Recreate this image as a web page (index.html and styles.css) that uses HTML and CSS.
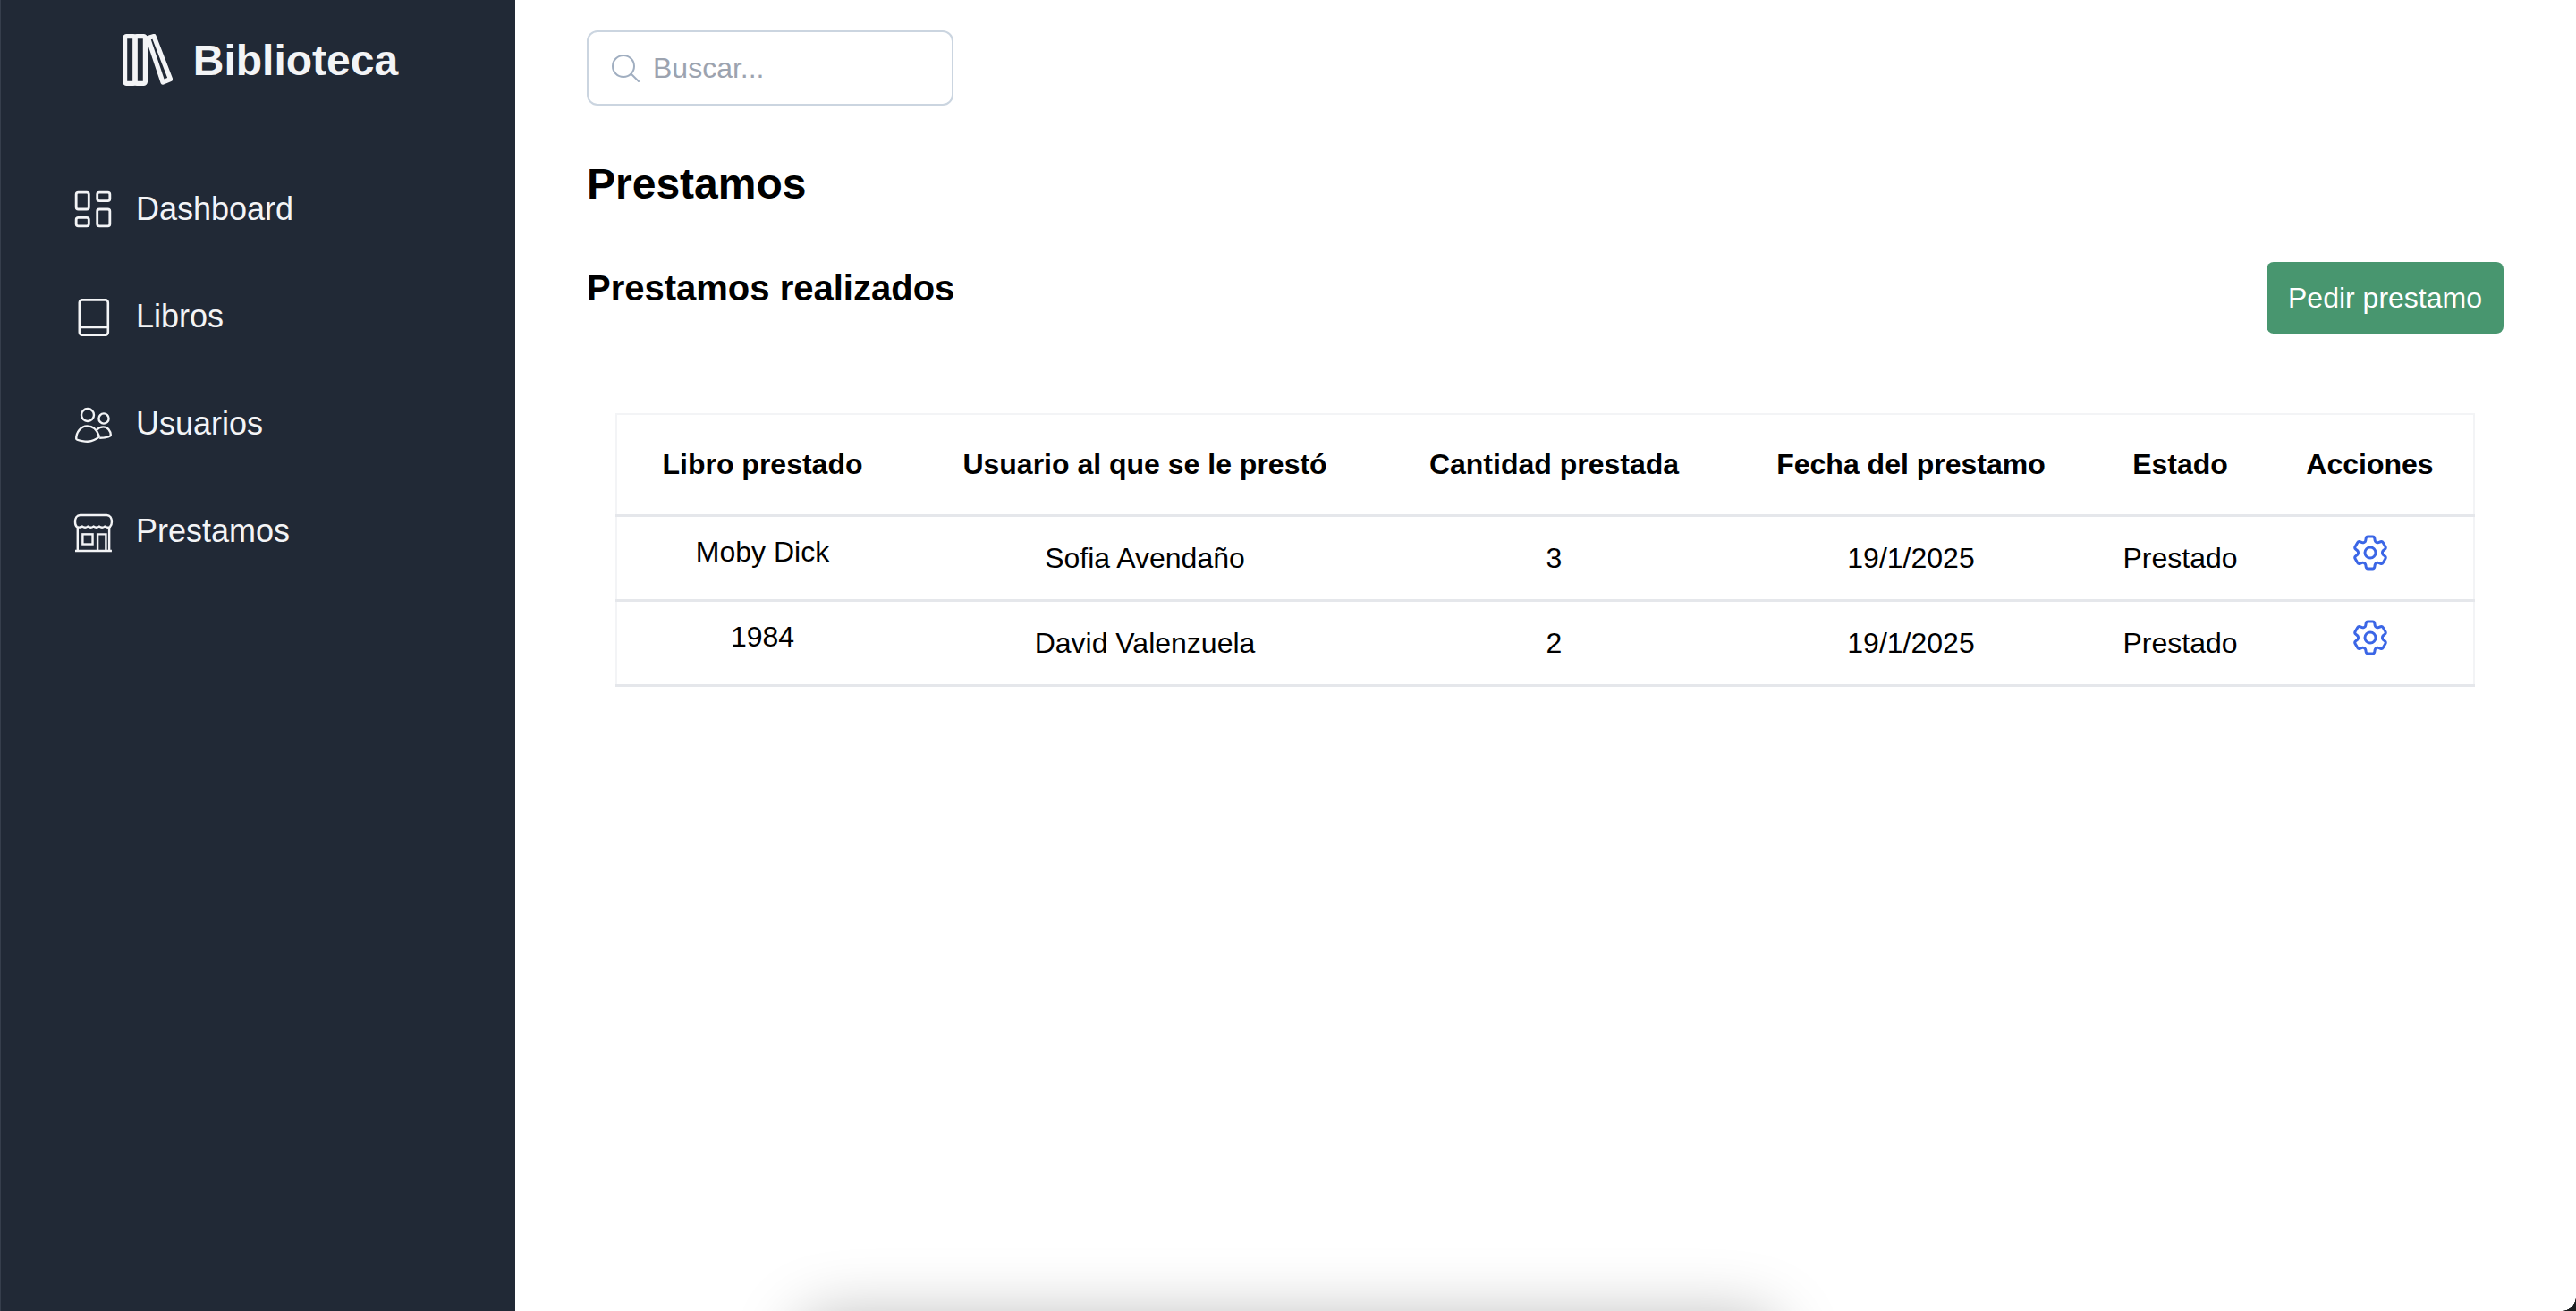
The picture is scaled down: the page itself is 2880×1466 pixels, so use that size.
FILE: index.html
```html
<!DOCTYPE html>
<html lang="es">
<head>
  <meta charset="UTF-8" />
  <title>Biblioteca</title>
  <link rel="stylesheet" href="styles.css">
</head>
<body>
  <aside class="sidebar">
    <div class="logo">
      <svg class="logo-icon" viewBox="0 0 56 58" fill="none" stroke="currentColor" stroke-width="5.200" stroke-linejoin="round">
        <rect x="2.600" y="2.600" width="11.400" height="52.800" rx="2"/>
        <rect x="14" y="2.600" width="11.400" height="52.800" rx="2"/>
        <path d="M28.500 4.500l6.500-2 18.500 48-8.500 3.500z"/>
      </svg>
      <span>Biblioteca</span>
    </div>
    <nav class="nav">
      <a class="nav-item" href="#">
        <svg class="nav-icon" viewBox="1.800 1.800 20.400 20.400" fill="none" stroke="currentColor" stroke-width="1.200">
          <path d="M5 4h4a1 1 0 0 1 1 1v6a1 1 0 0 1-1 1H5a1 1 0 0 1-1-1V5a1 1 0 0 1 1-1m0 12h4a1 1 0 0 1 1 1v2a1 1 0 0 1-1 1H5a1 1 0 0 1-1-1v-2a1 1 0 0 1 1-1m10-4h4a1 1 0 0 1 1 1v6a1 1 0 0 1-1 1h-4a1 1 0 0 1-1-1v-6a1 1 0 0 1 1-1m0-8h4a1 1 0 0 1 1 1v2a1 1 0 0 1-1 1h-4a1 1 0 0 1-1-1V5a1 1 0 0 1 1-1"/>
        </svg>
        Dashboard
      </a>
      <a class="nav-item" href="#">
        <svg class="nav-icon" viewBox="0 0 24 24" fill="none" stroke="currentColor" stroke-width="1.300">
          <rect x="4.400" y="2.700" width="16" height="19.600" rx="1.500"/>
          <path d="M4.400 18h16"/>
        </svg>
        Libros
      </a>
      <a class="nav-item" href="#">
        <svg class="nav-icon" viewBox="0 0 24 24" fill="none" stroke="currentColor" stroke-width="1.200">
          <circle cx="9" cy="7" r="3.500"/>
          <circle cx="18" cy="9" r="2.800"/>
          <path d="M2.600 20.300C2.600 16.500 5.200 13.200 8.700 13.200c3 0 5.500 2 6.700 5.600.2.800-2.400 2.200-4.400 2.800-2.400.7-8.400-.3-8.400-1.300z"/>
          <path d="M14 15.400c1-1.100 2.300-1.700 3.700-1.700 2.500 0 4.200 2.200 4.200 4.600 0 .9-3.300 1.500-6.300 1.600"/>
        </svg>
        Usuarios
      </a>
      <a class="nav-item" href="#">
        <svg class="nav-icon" viewBox="-1.150 -1.700 25.800 25.800" fill="none" stroke="currentColor" stroke-width="1.300">
          <path d="M4 1.500h16c2 0 3 2 3 4 0 1.500-.5 2.500-1 3-1 .6-2 .6-3.200-.2-1.100.8-2.200.8-3.400 0-1.100.8-2.200.8-3.400 0-1.100.8-2.200.8-3.400 0-1.100.8-2.200.8-3.400 0C4 9 3 9 2 8.500c-.6-.5-1-1.500-1-3 0-2 1-4 3-4z"/>
          <path d="M2.500 9v14M21.500 9v14M1 23h22"/>
          <rect x="5.500" y="13" width="6" height="6"/>
          <path d="M14.500 23V13h5v10"/>
        </svg>
        Prestamos
      </a>
    </nav>
  </aside>

  <main class="main">
    <label class="search">
      <svg class="search-icon" viewBox="0 0 32 32" fill="none" stroke="currentColor" stroke-width="2" stroke-linecap="round">
        <circle cx="14" cy="14" r="12"/>
        <path d="M23 23l8 8"/>
      </svg>
      <input class="search-input" type="text" placeholder="Buscar...">
    </label>

    <h1 class="page-title">Prestamos</h1>

    <div class="section-head">
      <h2 class="section-title">Prestamos realizados</h2>
      <button class="btn-green" type="button">Pedir prestamo</button>
    </div>

    <div class="table-wrap">
      <table class="loans">
        <thead>
          <tr>
            <th class="col-book">Libro prestado</th>
            <th class="col-user">Usuario al que se le prestó</th>
            <th class="col-qty">Cantidad prestada</th>
            <th class="col-date">Fecha del prestamo</th>
            <th class="col-state">Estado</th>
            <th class="col-actions">Acciones</th>
          </tr>
        </thead>
        <tbody>
          <tr>
            <td class="cell-top">Moby Dick</td>
            <td>Sofia Avendaño</td>
            <td>3</td>
            <td>19/1/2025</td>
            <td>Prestado</td>
            <td class="cell-top cell-actions">
              <svg class="gear" viewBox="0 0 24 24" fill="none" stroke="currentColor" stroke-width="1.500" stroke-linecap="round" stroke-linejoin="round">
                <path d="M9.594 3.940c.090-.542.560-.940 1.110-.940h2.593c.550 0 1.020.398 1.110.940l.213 1.281c.063.374.313.686.645.870.074.040.147.083.220.127.325.196.720.257 1.075.124l1.217-.456a1.125 1.125 0 0 1 1.370.490l1.296 2.247a1.125 1.125 0 0 1-.260 1.431l-1.003.827c-.293.241-.438.613-.430.992a7.723 7.723 0 0 1 0 .255c-.008.378.137.750.430.991l1.004.827c.424.350.534.955.260 1.430l-1.298 2.247a1.125 1.125 0 0 1-1.369.491l-1.217-.456c-.355-.133-.750-.072-1.076.124a6.470 6.470 0 0 1-.220.128c-.331.183-.581.495-.644.869l-.213 1.281c-.090.543-.560.940-1.110.940h-2.594c-.550 0-1.019-.398-1.110-.940l-.213-1.281c-.062-.374-.312-.686-.644-.870a6.520 6.520 0 0 1-.220-.127c-.325-.196-.720-.257-1.076-.124l-1.217.456a1.125 1.125 0 0 1-1.369-.490l-1.297-2.247a1.125 1.125 0 0 1 .260-1.431l1.004-.827c.292-.240.437-.613.430-.991a6.932 6.932 0 0 1 0-.255c.007-.380-.138-.751-.430-.992l-1.004-.827a1.125 1.125 0 0 1-.260-1.430l1.297-2.247a1.125 1.125 0 0 1 1.370-.491l1.216.456c.356.133.751.072 1.076-.124.072-.044.146-.086.220-.128.332-.183.582-.495.644-.869l.214-1.280Z"/>
                <path d="M15 12a3 3 0 1 1-6 0 3 3 0 0 1 6 0Z"/>
              </svg>
            </td>
          </tr>
          <tr>
            <td class="cell-top">1984</td>
            <td>David Valenzuela</td>
            <td>2</td>
            <td>19/1/2025</td>
            <td>Prestado</td>
            <td class="cell-top cell-actions">
              <svg class="gear" viewBox="0 0 24 24" fill="none" stroke="currentColor" stroke-width="1.500" stroke-linecap="round" stroke-linejoin="round">
                <path d="M9.594 3.940c.090-.542.560-.940 1.110-.940h2.593c.550 0 1.020.398 1.110.940l.213 1.281c.063.374.313.686.645.870.074.040.147.083.220.127.325.196.720.257 1.075.124l1.217-.456a1.125 1.125 0 0 1 1.370.490l1.296 2.247a1.125 1.125 0 0 1-.260 1.431l-1.003.827c-.293.241-.438.613-.430.992a7.723 7.723 0 0 1 0 .255c-.008.378.137.750.430.991l1.004.827c.424.350.534.955.260 1.430l-1.298 2.247a1.125 1.125 0 0 1-1.369.491l-1.217-.456c-.355-.133-.750-.072-1.076.124a6.470 6.470 0 0 1-.220.128c-.331.183-.581.495-.644.869l-.213 1.281c-.090.543-.560.940-1.110.940h-2.594c-.550 0-1.019-.398-1.110-.940l-.213-1.281c-.062-.374-.312-.686-.644-.870a6.520 6.520 0 0 1-.220-.127c-.325-.196-.720-.257-1.076-.124l-1.217.456a1.125 1.125 0 0 1-1.369-.490l-1.297-2.247a1.125 1.125 0 0 1 .260-1.431l1.004-.827c.292-.240.437-.613.430-.991a6.932 6.932 0 0 1 0-.255c.007-.380-.138-.751-.430-.992l-1.004-.827a1.125 1.125 0 0 1-.260-1.430l1.297-2.247a1.125 1.125 0 0 1 1.370-.491l1.216.456c.356.133.751.072 1.076-.124.072-.044.146-.086.220-.128.332-.183.582-.495.644-.869l.214-1.280Z"/>
                <path d="M15 12a3 3 0 1 1-6 0 3 3 0 0 1 6 0Z"/>
              </svg>
            </td>
          </tr>
        </tbody>
      </table>
    </div>
  </main>

  <!-- window shadow and corner caught by the screenshot -->
  <div class="window-shadow"></div>
  <div class="window-corner"></div>
</body>
</html>
```

FILE: styles.css
```css
* {
  box-sizing: border-box;
}
html, body {
  height: 100%;
}
body {
  margin: 0;
  display: flex;
  overflow: hidden;
  position: relative;
  background: #fff;
  color: #000;
  font-family: "Liberation Sans", Arial, sans-serif;
  font-size: 32px;
}
.sidebar {
  width: 576px;
  flex-shrink: 0;
  background: #212936;
  border-left: 1px solid #363e4c;
  color: #f3f4f6;
}
.logo {
  display: flex;
  align-items: center;
  justify-content: center;
  gap: 23px;
  height: 64px;
  margin-top: 35px;
  padding-left: 5px;
  font-size: 48px;
  font-weight: 700;
}
.logo-icon {
  width: 56px;
  height: 58px;
}
.nav {
  display: flex;
  flex-direction: column;
  margin-top: 75px;
  padding-left: 79px;
}
.nav-item {
  display: flex;
  align-items: center;
  gap: 24px;
  height: 120px;
  color: #f3f4f6;
  font-size: 36px;
  text-decoration: none;
}
.nav-icon {
  width: 48px;
  height: 48px;
  flex-shrink: 0;
}
.main {
  flex: 1;
  padding: 34px 82px 0 80px;
}
.search {
  display: flex;
  align-items: center;
  gap: 15px;
  width: 410px;
  height: 84px;
  padding: 0 25px;
  border: 2px solid #cbd5e0;
  border-radius: 12px;
  color: #a0aec0;
}
.search-icon {
  width: 32px;
  height: 32px;
  flex-shrink: 0;
}
.search-input {
  width: 100%;
  min-width: 0;
  border: none;
  outline: none;
  padding: 0;
  font-family: inherit;
  font-size: 32px;
}
.search-input::placeholder {
  color: #9ca3af;
}
.page-title {
  margin: 58px 0 0;
  font-size: 48px;
  line-height: 60px;
}
.section-head {
  display: flex;
  justify-content: space-between;
  align-items: flex-start;
  margin-top: 57px;
}
.section-title {
  margin: 0;
  padding-top: 4px;
  font-size: 40px;
  line-height: 50px;
}
.btn-green {
  height: 80px;
  padding: 0 24px;
  border: none;
  border-radius: 8px;
  background: #48966f;
  color: #fff;
  font-family: inherit;
  font-size: 32px;
}
.table-wrap {
  margin-top: 89px;
  padding: 0 32px;
}
.loans {
  width: 2077px;
  table-layout: fixed;
  border-collapse: collapse;
  border: 2px solid #f3f4f6;
  text-align: center;
}
.loans th {
  height: 113px;
  padding: 0;
  font-weight: 700;
  border-bottom: 3px solid #e5e7eb;
}
.loans th.col-actions {
  padding-left: 2px;
}
.loans td {
  height: 95px;
  padding: 2px 0 0;
  border-bottom: 3px solid #e5e7eb;
}
.loans td.cell-top {
  padding-bottom: 14px;
}
.loans td.cell-actions {
  padding-left: 2px;
}
.col-book { width: 326px; }
.col-user { width: 530px; }
.col-qty { width: 385px; }
.col-date { width: 413px; }
.col-state { width: 189px; }
.col-actions { width: 234px; }
.gear {
  display: block;
  width: 48px;
  height: 48px;
  margin: 0 auto;
  color: #3b66e6;
}
.window-shadow {
  position: absolute;
  left: 800px;
  bottom: 0;
  width: 1280px;
  height: 130px;
  overflow: hidden;
}
.window-shadow::after {
  content: "";
  position: absolute;
  left: 100px;
  top: 144px;
  width: 1080px;
  height: 200px;
  border-radius: 30px;
  box-shadow: 0 0 70px 10px rgba(0, 0, 0, 0.26);
}
.window-corner {
  position: absolute;
  right: 0;
  bottom: 0;
  width: 16px;
  height: 16px;
  background: radial-gradient(circle at 0 0, transparent 15.500px, #1b1f20 16px);
}
```
